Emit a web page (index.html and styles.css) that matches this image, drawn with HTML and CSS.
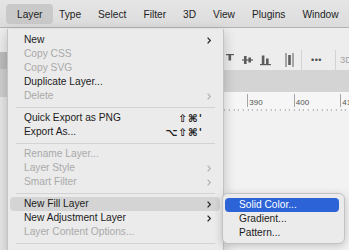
FILE: index.html
```html
<html>
  <head>
    <meta charset="utf-8">
    <meta name="viewport" content="width=device-width, initial-scale=1.0">
    <title>Layer menu</title>
    <link rel="stylesheet" href="styles.css">
  </head>
  <body>
    <div class="app">
      <header class="menubar">
        <span class="open">Layer</span>
        <span>Type</span>
        <span>Select</span>
        <span>Filter</span>
        <span>3D</span>
        <span>View</span>
        <span>Plugins</span>
        <span>Window</span>
      </header>

      <div class="workspace">
        <aside class="toolstrip">
          <div class="tool-top"></div>
          <div class="tool-dark"></div>
          <div class="tool-mid"></div>
          <div class="tool-rest"></div>
        </aside>

        <main class="document">
          <div class="options">
            <!-- align top -->
            <svg class="icon i-top" width="8" height="12" viewBox="0 0 8 12">
              <rect x="0" y="2" width="8" height="1.2" />
              <rect x="2.5" y="3" width="2.6" height="5.5" />
            </svg>
            <!-- align vertical centers -->
            <svg class="icon i-mid" width="11" height="12" viewBox="0 0 11 12">
              <rect x="0" y="5.4" width="11" height="1.2" />
              <rect x="2" y="2" width="2.6" height="8" />
              <rect x="6.4" y="3.5" width="2.6" height="5" />
            </svg>
            <!-- align bottom -->
            <svg class="icon i-bottom" width="11" height="12" viewBox="0 0 11 12">
              <rect x="0" y="10" width="11" height="1.2" />
              <rect x="1.8" y="1.5" width="2.6" height="8.5" />
              <rect x="6" y="4.5" width="2.6" height="5.5" />
            </svg>
            <!-- distribute -->
            <svg class="icon i-dist" width="9" height="14" viewBox="0 0 9 14">
              <rect x="0.5" y="0" width="1" height="14" />
              <rect x="7.5" y="0" width="1" height="14" />
              <rect x="3.2" y="2" width="2.6" height="10" />
            </svg>
            <span class="vsep"></span>
            <span class="more">&bull;&bull;&bull;</span>
            <span class="vsep"></span>
            <span class="mode">3D Mode:</span>
          </div>
          <div class="tabs"></div>
          <div class="ruler">
            <span class="mark"></span>
            <span class="mark"></span>
            <span class="mark"></span>
            <span class="mark"></span>
            <span class="mark"></span>
            <span class="mark">390</span>
            <span class="mark">400</span>
            <span class="mark">410</span>
          </div>
          <div class="canvas"></div>
        </main>
      </div>

      <div class="menu layer-menu">
        <div class="item"><span class="label">New</span><svg class="chevron" width="4" height="7" viewBox="0 0 4 7"><polyline points="0.6,0.6 3.3,3.5 0.6,6.4" /></svg></div>
        <div class="item disabled"><span class="label">Copy CSS</span></div>
        <div class="item disabled"><span class="label">Copy SVG</span></div>
        <div class="item"><span class="label">Duplicate Layer...</span></div>
        <div class="item disabled"><span class="label">Delete</span><svg class="chevron" width="4" height="7" viewBox="0 0 4 7"><polyline points="0.6,0.6 3.3,3.5 0.6,6.4" /></svg></div>
        <div class="sep"></div>
        <div class="item"><span class="label">Quick Export as PNG</span><span class="keys">⇧⌘'</span></div>
        <div class="item"><span class="label">Export As...</span><span class="keys">⌥⇧⌘'</span></div>
        <div class="sep"></div>
        <div class="item disabled"><span class="label">Rename Layer...</span></div>
        <div class="item disabled"><span class="label">Layer Style</span><svg class="chevron" width="4" height="7" viewBox="0 0 4 7"><polyline points="0.6,0.6 3.3,3.5 0.6,6.4" /></svg></div>
        <div class="item disabled"><span class="label">Smart Filter</span><svg class="chevron" width="4" height="7" viewBox="0 0 4 7"><polyline points="0.6,0.6 3.3,3.5 0.6,6.4" /></svg></div>
        <div class="sep"></div>
        <div class="item hover"><span class="label">New Fill Layer</span><svg class="chevron" width="4" height="7" viewBox="0 0 4 7"><polyline points="0.6,0.6 3.3,3.5 0.6,6.4" /></svg></div>
        <div class="item"><span class="label">New Adjustment Layer</span><svg class="chevron" width="4" height="7" viewBox="0 0 4 7"><polyline points="0.6,0.6 3.3,3.5 0.6,6.4" /></svg></div>
        <div class="item disabled"><span class="label">Layer Content Options...</span></div>
        <div class="sep"></div>
      </div>

      <div class="menu submenu">
        <div class="item selected"><span class="label">Solid Color...</span></div>
        <div class="item"><span class="label">Gradient...</span></div>
        <div class="item"><span class="label">Pattern...</span></div>
      </div>
    </div>
  </body>
</html>
```

FILE: styles.css
```css
body {
  margin: 0;
  width: 349px;
  height: 250px;
  overflow: hidden;
  font-family: "Liberation Sans", Arial, sans-serif;
  background-color: #f2f2f2;
}

.app {
  position: relative;
  height: 250px;
  display: flex;
  flex-direction: column;
}

/* top menu bar */

.menubar {
  display: flex;
  align-items: flex-start;
  height: 28px;
  box-sizing: border-box;
  padding: 4px 0 0 9px;
  background: linear-gradient(#e5e5e5, #dcdcdc);
  border-bottom: 1px solid #b3b3b3;
  font-size: 10.2px;
  color: #1e1e1e;
}

.menubar span {
  height: 20px;
  line-height: 22px;
  padding: 0 8.5px;
  white-space: nowrap;
}

.menubar .open {
  background-color: #c9c9c9;
  border-radius: 4px;
  padding: 0 11px;
  margin: 0 -3px;
}

/* app behind the menu */

.workspace {
  flex: 1;
  display: flex;
  min-height: 0;
}

.toolstrip {
  width: 7px;
  display: flex;
  flex-direction: column;
  background-color: #e8e8e8;
}

.tool-top {
  height: 24px;
  background-color: #ededed;
}

.tool-dark {
  height: 17px;
  background-color: #bdbdbd;
}

.tool-mid {
  height: 28px;
  background-color: #cfcfcf;
}

.tool-rest {
  flex: 1;
}

.document {
  flex: 1;
  display: flex;
  flex-direction: column;
  overflow: hidden;
}

.options {
  display: flex;
  align-items: center;
  height: 42px;
  box-sizing: border-box;
  padding: 21px 0 0 219px;
  background-color: #ededed;
  fill: #5c5c5c;
  white-space: nowrap;
}

.icon {
  flex-shrink: 0;
}

.i-top {
  margin-top: -3px;
}

.i-mid {
  margin-left: 8px;
}

.i-bottom {
  margin-left: 7px;
}

.i-dist {
  margin-left: 14px;
}

.vsep {
  flex-shrink: 0;
  width: 1px;
  height: 20px;
  margin-left: 7px;
  background-color: #d2d2d2;
}

.more {
  margin-left: 9px;
  margin-right: 6px;
  font-size: 9px;
  letter-spacing: 0.5px;
  color: #4a4a4a;
}

.mode {
  margin-left: 4px;
  font-size: 9.5px;
  color: #a3a3a3;
}

.tabs {
  height: 22px;
  background-color: #d4d4d4;
}

.ruler {
  display: flex;
  height: 19px;
  padding-left: 7.8px;
  background-color: #f6f6f6;
  background-image: repeating-linear-gradient(to right, #b0b0b0 0 1px, transparent 1px 4.65px);
  background-size: 100% 2px;
  background-position: 7.8px 17px;
  background-repeat: repeat-x;
}

.mark {
  flex-shrink: 0;
  width: 46.5px;
  height: 13px;
  margin-top: 2px;
  box-sizing: border-box;
  padding: 3.5px 0 0 1px;
  border-left: 1px solid #a5a5a5;
  font-size: 8px;
  line-height: 9px;
  color: #555;
}

.canvas {
  flex: 1;
  background-color: #f2f2f2;
}

/* dropdown menus */

.menu {
  position: absolute;
  box-sizing: border-box;
  background-color: #ebebeb;
  color: #1c1c1c;
  font-size: 10.2px;
  white-space: nowrap;
}

.layer-menu {
  left: 7px;
  top: 29px;
  width: 217px;
  height: 232px;
  padding-top: 4px;
  border-left: 1px solid #c4c4c4;
  border-right: 1px solid #c4c4c4;
  box-shadow: 0 4px 12px rgba(0, 0, 0, 0.22);
}

.item {
  display: flex;
  align-items: center;
  height: 14px;
  line-height: 14px;
  margin: 0 3px 0 2px;
  padding: 0 9px 0 14px;
  border-radius: 4px;
}

.label {
  flex: 1;
}

.item.disabled {
  color: #a9a9a9;
}

.item.hover {
  background-color: #d4d4d4;
}

.keys {
  padding-right: 8px;
  font-family: "DejaVu Sans", sans-serif;
  font-size: 10.5px;
  font-weight: bold;
  letter-spacing: 1px;
  color: #222;
}

.chevron {
  fill: none;
  stroke: #2a2a2a;
  stroke-width: 1.3;
}

.item.disabled .chevron {
  stroke: #b5b5b5;
}

.sep {
  height: 1px;
  margin: 3.5px 8px;
  background-color: #d3d3d3;
}

.submenu {
  left: 222px;
  top: 193px;
  width: 123px;
  height: 51px;
  padding-top: 4px;
  border: 1px solid #c3c3c3;
  border-radius: 6px;
  box-shadow: 0 2px 8px rgba(0, 0, 0, 0.2);
}

.submenu .item {
  margin: 0 5px 0 2px;
}

.item.selected {
  background-color: #2c63d7;
  color: #fff;
}
```
